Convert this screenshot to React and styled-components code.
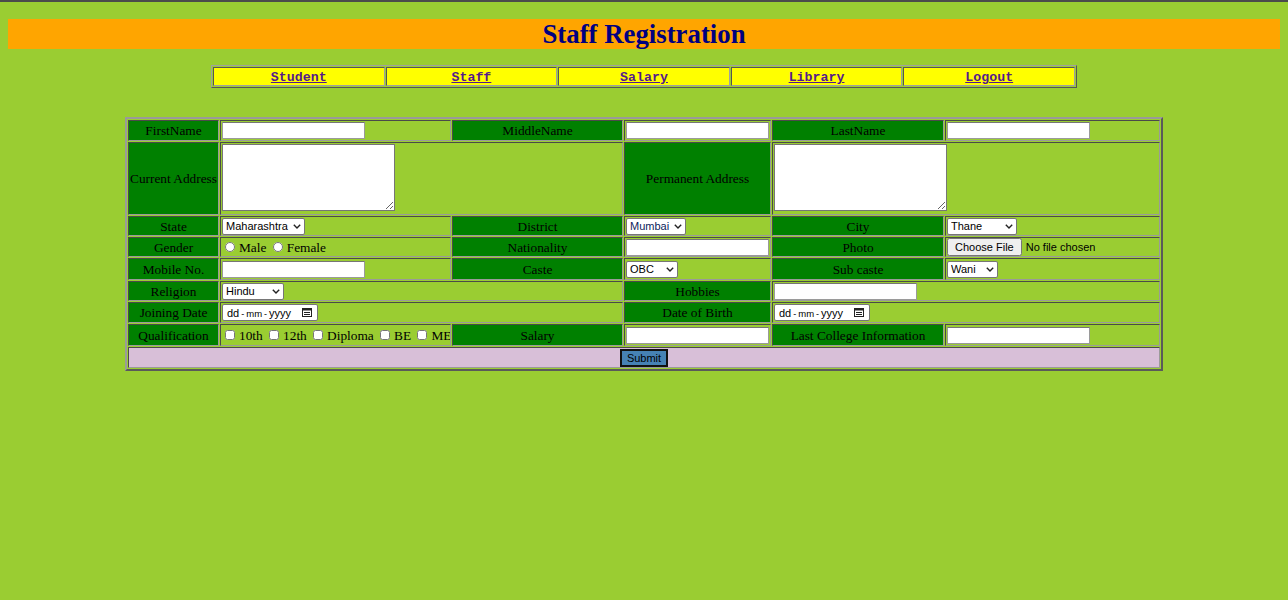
import React from 'react'
import styled, { createGlobalStyle } from 'styled-components';

const Global = createGlobalStyle`
  html, body {
    margin: 0;
    padding: 0;
    background: yellowgreen;
  }
  body {
    border-top: 2px solid #4b4b4b;
    font-family: "Liberation Serif", serif;
  }
`

const Page = styled.div`
  padding: 17px 8px 0;
`

const Title = styled.h1`
  margin: 0;
  height: 30px;
  line-height: 30px;
  background: orange;
  color: navy;
  text-align: center;
  font-size: 26.8px;
  font-weight: bold;
`

const NavTable = styled.table`
  margin: 16px auto 0;
  width: 866px;
  border: 1px solid;
  border-color: #a0a0a0 #555 #555 #a0a0a0;
  border-spacing: 1px;
`

const NavCell = styled.td`
  box-sizing: border-box;
  background: yellow;
  border: 1px solid;
  border-color: #555 #a0a0a0 #a0a0a0 #555;
  height: 18px;
  padding: 0;
  line-height: 15px;
  text-align: center;
  width: 20%;
`

const NavLink = styled.a`
  color: #551a8b;
  font-family: "Liberation Mono", monospace;
  font-weight: bold;
  font-size: 13.3px;
  text-decoration: underline;
  cursor: pointer;
`

const FormTable = styled.table`
  margin: 29px auto 0;
  width: 1038px;
  table-layout: fixed;
  border: 2px solid;
  border-color: #9a9a9a #5a5a5a #5a5a5a #9a9a9a;
  border-spacing: 1px;
  font-size: 13.33px;
  line-height: 15px;
`

const Cell = styled.td`
  box-sizing: border-box;
  border: 1px solid;
  border-color: #4a4a4a #9a9a9a #9a9a9a #4a4a4a;
  padding: 0 1px;
  height: ${p => p.$h || 20}px;
  vertical-align: middle;
  white-space: nowrap;
  overflow: hidden;
`

const Label = styled(Cell)`
  background: green;
  color: #000;
  text-align: center;
`

const Field = styled(Cell)`
  text-align: left;
`

const SubmitCell = styled(Cell)`
  background: thistle;
  text-align: center;
`

const TextInput = styled.input`
  box-sizing: border-box;
  width: 143px;
  height: 17px;
  margin: 0;
  border: 1px solid #9a9a9a;
  border-top-color: #767676;
  font: 11px "Liberation Sans", sans-serif;
  vertical-align: middle;
`

const TextArea = styled.textarea`
  box-sizing: border-box;
  width: 173px;
  height: 67px;
  margin: 0;
  border: 1px solid #767676;
  font: 11px "Liberation Mono", monospace;
  display: inline-block;
  vertical-align: baseline;
`

const SelectWrap = styled.span`
  position: relative;
  display: inline-block;
  vertical-align: middle;
  line-height: 0;
`

const Select = styled.select`
  box-sizing: border-box;
  appearance: none;
  -webkit-appearance: none;
  width: ${p => p.$w}px;
  height: 17px;
  margin: 0;
  padding: 0 12px 0 3px;
  border: 1px solid #767676;
  border-radius: 2px;
  background: #fff;
  font: 11px "Liberation Sans", sans-serif;
  color: ${p => p.$color || '#000'};
`

const Chevron = styled.svg`
  position: absolute;
  right: 4px;
  top: 6px;
  width: 8px;
  height: 5px;
  pointer-events: none;
`

const DateBox = styled.span`
  box-sizing: border-box;
  display: inline-flex;
  align-items: center;
  justify-content: space-between;
  width: 96px;
  height: 17px;
  padding: 0 5px 0 4px;
  border: 1px solid #767676;
  border-radius: 2px;
  background: #fff;
  font: 11px "Liberation Sans", sans-serif;
  color: #000;
  vertical-align: middle;
`

const DateSep = styled.span`
  margin: 0 2px;
  font-size: 9px;
`

const DateMonth = styled.span`
  font-size: 9.5px;
`

const FileInput = styled.input`
  font: 11px "Liberation Sans", sans-serif;
  margin: 0;
  vertical-align: middle;
`

const Choice = styled.label`
  input {
    margin: 0 4px 0 3px;
    width: 10px;
    height: 10px;
    vertical-align: 0;
  }
`

const SubmitButton = styled.button`
  box-sizing: border-box;
  background: steelblue;
  border: 2px solid #111;
  color: #000;
  font: 11px "Liberation Sans", sans-serif;
  padding: 0 4px;
  width: 48px;
  height: 18px;
  line-height: 12px;
  vertical-align: middle;
`

const navItems = ['Student', 'Staff', 'Salary', 'Library', 'Logout']

const Drop = ({ w, value, color }) => (
  <SelectWrap>
    <Select $w={w} $color={color} defaultValue={value}>
      <option>{value}</option>
    </Select>
    <Chevron viewBox="0 0 8 5">
      <path d="M0.8 0.8 L4 4 L7.2 0.8" fill="none" stroke="#222" strokeWidth="1.4" />
    </Chevron>
  </SelectWrap>
)

const DateField = () => (
  <DateBox>
    <span>dd<DateSep>-</DateSep><DateMonth>mm</DateMonth><DateSep>-</DateSep>yyyy</span>
    <svg width="10" height="9" viewBox="0 0 10 9">
      <rect x="0.5" y="0.5" width="9" height="8" fill="none" stroke="#222" strokeWidth="1" />
      <rect x="0.5" y="0.5" width="9" height="2" fill="#222" />
      <path d="M2 4.5h6M2 6.5h6" stroke="#222" strokeWidth="1" />
    </svg>
  </DateBox>
)

const App = () => {
  return (
    <Page>
      <Global />
      <Title>Staff Registration</Title>

      <NavTable>
        <tbody>
          <tr>
            {navItems.map(n => (
              <NavCell key={n}><NavLink href="#">{n}</NavLink></NavCell>
            ))}
          </tr>
        </tbody>
      </NavTable>

      <FormTable>
        <colgroup>
          <col style={{ width: 91 }} />
          <col style={{ width: 231 }} />
          <col style={{ width: 171 }} />
          <col style={{ width: 147 }} />
          <col style={{ width: 172 }} />
          <col style={{ width: 215 }} />
        </colgroup>
        <tbody>
          <tr>
            <Label $h={21}>FirstName</Label>
            <Field $h={21}><TextInput type="text" /></Field>
            <Label $h={21}>MiddleName</Label>
            <Field $h={21}><TextInput type="text" /></Field>
            <Label $h={21}>LastName</Label>
            <Field $h={21}><TextInput type="text" /></Field>
          </tr>
          <tr>
            <Label $h={73}>Current Address</Label>
            <Field $h={73} colSpan={2}><TextArea /></Field>
            <Label $h={73}>Permanent Address</Label>
            <Field $h={73} colSpan={2}><TextArea /></Field>
          </tr>
          <tr>
            <Label>State</Label>
            <Field><Drop w={83} value="Maharashtra" /></Field>
            <Label>District</Label>
            <Field><Drop w={60} value="Mumbai" color="#0d1d5c" /></Field>
            <Label>City</Label>
            <Field><Drop w={70} value="Thane" /></Field>
          </tr>
          <tr>
            <Label>Gender</Label>
            <Field>
              <Choice><input type="radio" name="gender" />Male</Choice>{' '}
              <Choice><input type="radio" name="gender" />Female</Choice>
            </Field>
            <Label>Nationality</Label>
            <Field><TextInput type="text" /></Field>
            <Label>Photo</Label>
            <Field><FileInput type="file" /></Field>
          </tr>
          <tr>
            <Label $h={22}>Mobile No.</Label>
            <Field $h={22}><TextInput type="text" /></Field>
            <Label $h={22}>Caste</Label>
            <Field $h={22}><Drop w={52} value="OBC" /></Field>
            <Label $h={22}>Sub caste</Label>
            <Field $h={22}><Drop w={51} value="Wani" /></Field>
          </tr>
          <tr>
            <Label>Religion</Label>
            <Field colSpan={2}><Drop w={62} value="Hindu" /></Field>
            <Label>Hobbies</Label>
            <Field colSpan={2}><TextInput type="text" /></Field>
          </tr>
          <tr>
            <Label $h={21}>Joining Date</Label>
            <Field $h={21} colSpan={2}><DateField /></Field>
            <Label $h={21}>Date of Birth</Label>
            <Field $h={21} colSpan={2}><DateField /></Field>
          </tr>
          <tr>
            <Label $h={22}>Qualification</Label>
            <Field $h={22}>
              <Choice><input type="checkbox" />10th</Choice>{' '}
              <Choice><input type="checkbox" />12th</Choice>{' '}
              <Choice><input type="checkbox" />Diploma</Choice>{' '}
              <Choice><input type="checkbox" />BE</Choice>{' '}
              <Choice><input type="checkbox" />ME</Choice>
            </Field>
            <Label $h={22}>Salary</Label>
            <Field $h={22}><TextInput type="text" /></Field>
            <Label $h={22}>Last College Information</Label>
            <Field $h={22}><TextInput type="text" /></Field>
          </tr>
          <tr>
            <SubmitCell $h={21} colSpan={6}>
              <SubmitButton type="submit">Submit</SubmitButton>
            </SubmitCell>
          </tr>
        </tbody>
      </FormTable>
    </Page>
  );
}

export default App;
